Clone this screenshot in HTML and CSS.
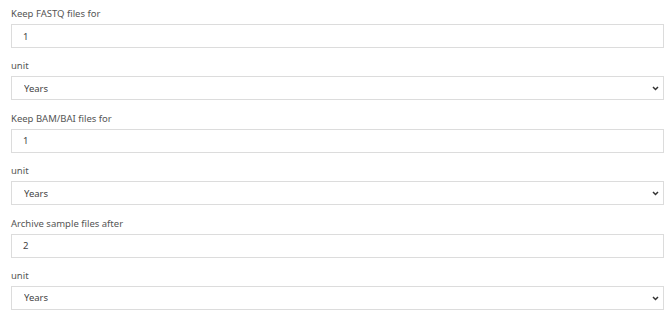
FILE: index.html
```html
<!DOCTYPE html>
<html lang="en">
<head>
    <meta charset="UTF-8">
    <title>Retention Settings</title>
    <link rel="stylesheet" href="styles.css">
</head>
<body>
    <form class="settings">
        <div class="form-group">
            <label for="fastq">Keep FASTQ files for</label>
            <input type="text" id="fastq" value="1">
        </div>
        <div class="form-group">
            <label for="fastqUnit">unit</label>
            <div class="select-wrap">
                <select id="fastqUnit">
                    <option>Years</option>
                    <option>Months</option>
                    <option>Days</option>
                </select>
                <svg class="chevron" width="7" height="5" viewBox="0 0 7 5"><path d="M1 1 L3.5 3.5 L6 1" fill="none" stroke="#333" stroke-width="1.5"/></svg>
            </div>
        </div>
        <div class="form-group">
            <label for="bam">Keep BAM/BAI files for</label>
            <input type="text" id="bam" value="1">
        </div>
        <div class="form-group">
            <label for="bamUnit">unit</label>
            <div class="select-wrap">
                <select id="bamUnit">
                    <option>Years</option>
                    <option>Months</option>
                    <option>Days</option>
                </select>
                <svg class="chevron" width="7" height="5" viewBox="0 0 7 5"><path d="M1 1 L3.5 3.5 L6 1" fill="none" stroke="#333" stroke-width="1.5"/></svg>
            </div>
        </div>
        <div class="form-group">
            <label for="archive">Archive sample files after</label>
            <input type="text" id="archive" value="2">
        </div>
        <div class="form-group">
            <label for="archiveUnit">unit</label>
            <div class="select-wrap">
                <select id="archiveUnit">
                    <option>Years</option>
                    <option>Months</option>
                    <option>Days</option>
                </select>
                <svg class="chevron" width="7" height="5" viewBox="0 0 7 5"><path d="M1 1 L3.5 3.5 L6 1" fill="none" stroke="#333" stroke-width="1.5"/></svg>
            </div>
        </div>
    </form>
</body>
</html>
```

FILE: styles.css
```css
body {
    font-family: "Noto Sans", Arial, sans-serif;
    font-size: 9.5px;
    margin: 0;
    padding: 8px 6px 0 11px;
    background-color: white;
    color: #444;
}
.form-group {
    margin-bottom: 12.4px;
}
label {
    display: block;
    line-height: 12px;
    margin-bottom: 4px;
    color: #555;
}
input[type="text"],
select {
    display: block;
    width: 100%;
    height: 24px;
    box-sizing: border-box;
    padding: 0 11px;
    border: 1px solid #dcdcdc;
    border-radius: 0;
    background-color: white;
    font-family: inherit;
    font-size: 9.5px;
    color: #444;
    outline: none;
}
select {
    -webkit-appearance: none;
    appearance: none;
    padding-left: 12px;
}
.select-wrap {
    position: relative;
}
.chevron {
    position: absolute;
    right: 5px;
    top: 10px;
    pointer-events: none;
}
```
